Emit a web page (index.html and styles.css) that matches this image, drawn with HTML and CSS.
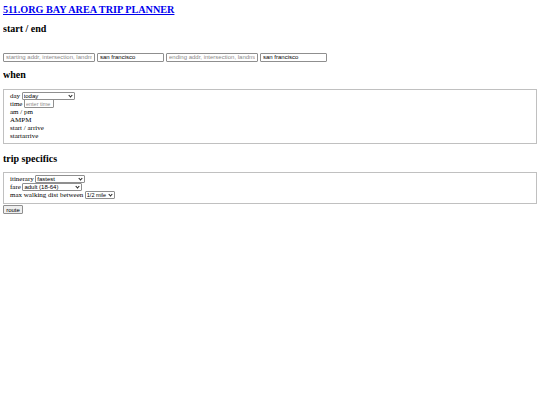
FILE: index.html
```html
<!DOCTYPE html>
<html>
<head>
<meta charset="utf-8">
<title>511.org Bay Area Trip Planner</title>
<link rel="stylesheet" href="styles.css">
</head>
<body>
<h1 class="title"><a href="#">511.ORG BAY AREA TRIP PLANNER</a></h1>
<form class="planner">
  <h2 class="section first">start / end</h2>
  <div class="endpoints">
    <input class="addr" type="text" placeholder="starting addr, intersection, landmark">
    <input class="city" type="text" value="san francisco">
    <input class="addr" type="text" placeholder="ending addr, intersection, landmark">
    <input class="city" type="text" value="san francisco">
  </div>
  <h2 class="section">when</h2>
  <fieldset class="box">
    <div class="row">day <span class="pick pick-day"><select class="sel"><option>today</option></select></span></div>
    <div class="row">time <input class="time" type="text" placeholder="enter time"></div>
    <div class="row">am / pm</div>
    <div class="row">AMPM</div>
    <div class="row">start / arrive</div>
    <div class="row">startarrive</div>
  </fieldset>
  <h2 class="section after-box">trip specifics</h2>
  <fieldset class="box box-trip">
    <div class="row">itinerary <span class="pick pick-itin"><select class="sel"><option>fastest</option></select></span></div>
    <div class="row">fare <span class="pick pick-fare"><select class="sel"><option>adult (18-64)</option></select></span></div>
    <div class="row">max walking dist between <span class="pick pick-walk"><select class="sel"><option>1/2 mile</option></select></span></div>
  </fieldset>
  <button class="route" type="button">route</button>
</form>
</body>
</html>
```

FILE: styles.css
```css
html, body {
  background: #ffffff;
}
body {
  margin: 3px;
  font-family: "Liberation Serif", "Times New Roman", serif;
  font-size: 7px;
  line-height: 8px;
  color: #000;
}
.title {
  font-size: 10.2px;
  line-height: 13px;
  margin: 0;
  font-weight: bold;
}
.title a {
  color: #0000ee;
  text-decoration: underline;
}
.section {
  font-size: 10px;
  line-height: 12px;
  font-weight: bold;
  margin: 7.5px 0 7.5px 0;
}
.section.first {
  margin-top: 7px;
}
.section.after-box {
  margin-top: 9px;
}
.endpoints {
  display: flex;
  gap: 2px;
  margin-top: 17.5px;
}
input, select, button {
  font-family: "Liberation Sans", Arial, sans-serif;
  font-size: 6px;
  box-sizing: border-box;
  margin: 0;
}
input {
  height: 9px;
  border: 1px solid #8f8f8f;
  border-radius: 1px;
  padding: 0 2px;
  background: #fff;
  color: #000;
}
input::placeholder {
  color: #8a8a8a;
}
.addr { width: 92px; }
.city { width: 67px; }
.box {
  margin: 0;
  border: 1px solid #c0c0c0;
  padding: 2px 6px 3px 6px;
}
.box-trip {
  padding-bottom: 4px;
}
.row {
  height: 8px;
  line-height: 8px;
  display: flex;
  align-items: center;
  gap: 1.5px;
  white-space: nowrap;
}
.pick {
  position: relative;
  display: inline-block;
  height: 8px;
}
.pick::after {
  content: "";
  position: absolute;
  right: 3px;
  top: 2px;
  width: 2px;
  height: 2px;
  border-right: 1px solid #222;
  border-bottom: 1px solid #222;
  transform: rotate(45deg);
  pointer-events: none;
}
.sel {
  appearance: none;
  -webkit-appearance: none;
  display: block;
  width: 100%;
  height: 8px;
  line-height: 6px;
  border: 1px solid #8f8f8f;
  border-radius: 1px;
  padding: 0 1px;
  background: #fff;
  color: #000;
}
.pick-day { width: 53px; }
.pick-itin { width: 50px; }
.pick-fare { width: 60px; }
.pick-walk { width: 30px; }
.pick-walk .sel { font-size: 5.5px; }
.time {
  width: 30px;
  height: 9px;
  padding: 0 1px;
  font-size: 5.5px;
}
.route {
  display: block;
  height: 9px;
  width: 20px;
  padding: 0;
  border: 1px solid #8f8f8f;
  border-radius: 1px;
  background: #efefef;
  color: #000;
  margin-top: 1px;
}
```
